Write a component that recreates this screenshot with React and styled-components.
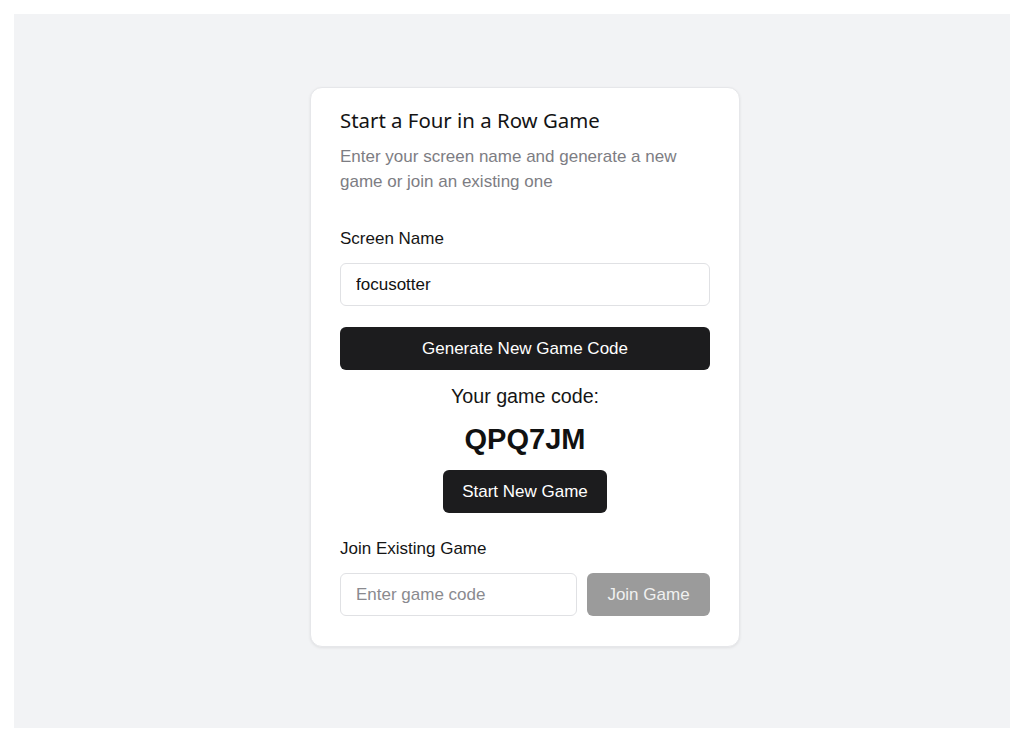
import styled, { createGlobalStyle } from "styled-components";

const GlobalStyle = createGlobalStyle`
  html, body {
    margin: 0;
    background: #ffffff;
  }
  body {
    padding: 14px;
    font-family: "Liberation Sans", Arial, sans-serif;
    color: #111111;
  }
  * {
    box-sizing: border-box;
  }
`;

const Page = styled.div`
  height: 714px;
  background: #f2f3f5;
  display: flex;
  justify-content: center;
  align-items: flex-start;
  padding: 73px 0 0 26px;
`;

const Card = styled.div`
  width: 430px;
  background: #ffffff;
  border: 1px solid #e6e7ea;
  border-radius: 12px;
  box-shadow: 0 1px 3px rgba(0, 0, 0, 0.08);
  padding: 18px 29px 30px;
  display: flex;
  flex-direction: column;
`;

const Title = styled.h1`
  margin: 0;
  font-family: "Noto Sans", sans-serif;
  font-size: 20.4px;
  font-weight: 400;
  line-height: 28px;
  color: #141414;
`;

const Description = styled.p`
  margin: 10px 0 0;
  font-size: 17px;
  line-height: 25px;
  color: #7d7d83;
`;

const Label = styled.label`
  display: block;
  font-size: 17px;
  line-height: 20px;
  margin-top: ${(p) => p.$top}px;
  color: #151515;
`;

const Input = styled.input`
  width: ${(p) => p.$width || "100%"};
  min-width: 0;
  height: 43px;
  margin-top: ${(p) => p.$top || 0}px;
  border: 1px solid #e0e1e4;
  border-radius: 6px;
  padding: 0 15px;
  font-family: "Liberation Sans", Arial, sans-serif;
  font-size: 17px;
  color: #111111;
  background: #ffffff;
  outline: none;
  flex-shrink: 0;

  &::placeholder {
    color: #8a8a8f;
  }
`;

const Button = styled.button`
  height: 43px;
  border: none;
  border-radius: 6px;
  background: ${(p) => (p.$disabled ? "#9b9b9b" : "#1c1c1e")};
  color: ${(p) => (p.$disabled ? "#f0f0f0" : "#ffffff")};
  font-family: "Liberation Sans", Arial, sans-serif;
  font-size: 17px;
  padding: 0 19px;
  cursor: pointer;
  width: ${(p) => p.$width || "auto"};
  margin-top: ${(p) => p.$top || 0}px;
  flex-shrink: 0;
`;

const CodeBlock = styled.div`
  display: flex;
  flex-direction: column;
  align-items: center;
  margin-top: 14px;
`;

const CodeLabel = styled.div`
  font-size: 19.7px;
  line-height: 24px;
  color: #151515;
`;

const Code = styled.div`
  margin-top: 15px;
  font-size: 29px;
  font-weight: 700;
  line-height: 32px;
  color: #111111;
`;

const JoinRow = styled.div`
  display: flex;
  gap: 10px;
  margin-top: 14px;

  & > input {
    flex: 1;
  }
`;

export default function App() {
  return (
    <>
      <GlobalStyle />
      <Page>
        <Card>
          <Title>Start a Four in a Row Game</Title>
          <Description>
            Enter your screen name and generate a new game or join an existing
            one
          </Description>

          <Label $top={35}>Screen Name</Label>
          <Input $top={14} defaultValue="focusotter" />

          <Button $width="100%" $top={21}>
            Generate New Game Code
          </Button>

          <CodeBlock>
            <CodeLabel>Your game code:</CodeLabel>
            <Code>QPQ7JM</Code>
            <Button $top={15}>Start New Game</Button>
          </CodeBlock>

          <Label $top={26}>Join Existing Game</Label>
          <JoinRow>
            <Input placeholder="Enter game code" />
            <Button $disabled $width="123px">
              Join Game
            </Button>
          </JoinRow>
        </Card>
      </Page>
    </>
  );
}
